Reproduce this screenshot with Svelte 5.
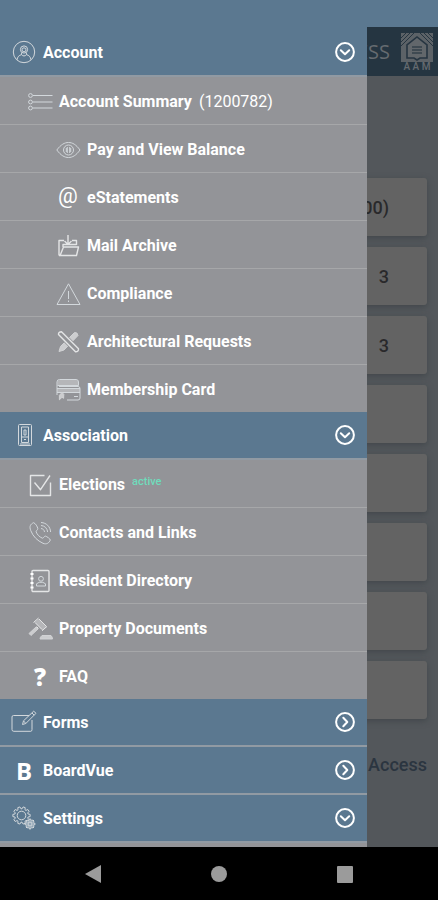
<script>
  const sections = [
    {
      name: 'Account', icon: 'account', open: true,
      items: [
        { name: 'Account Summary', note: '(1200782)', icon: 'summary' },
        { name: 'Pay and View Balance', icon: 'eye', sub: true },
        { name: 'eStatements', icon: 'at', sub: true },
        { name: 'Mail Archive', icon: 'archive', sub: true },
        { name: 'Compliance', icon: 'warning', sub: true },
        { name: 'Architectural Requests', icon: 'tools', sub: true },
        { name: 'Membership Card', icon: 'card', sub: true }
      ]
    },
    {
      name: 'Association', icon: 'door', open: true,
      items: [
        { name: 'Elections', badge: 'active', icon: 'check' },
        { name: 'Contacts and Links', icon: 'phone' },
        { name: 'Resident Directory', icon: 'directory' },
        { name: 'Property Documents', icon: 'gavel' },
        { name: 'FAQ', icon: 'question' }
      ]
    },
    { name: 'Forms', icon: 'forms', open: false, items: [] },
    { name: 'BoardVue', icon: 'board', open: false, items: [] },
    { name: 'Settings', icon: 'gears', open: true, items: [] }
  ];

  const cards = ['(0.00)', '3', '3', '', '', '', '', ''];

  function gear(cx, cy, outer, inner, teeth) {
    const pts = [];
    for (let i = 0; i < teeth; i++) {
      const a = (i * 2 * Math.PI) / teeth;
      const s = Math.PI / teeth;
      for (const [r, d] of [[inner, -0.75], [outer, -0.4], [outer, 0.4], [inner, 0.75]]) {
        pts.push(`${(cx + r * Math.cos(a + d * s)).toFixed(2)},${(cy + r * Math.sin(a + d * s)).toFixed(2)}`);
      }
    }
    return pts.join(' ');
  }
</script>

{#snippet icon(kind)}
  <span class="icon" aria-hidden="true">
    {#if kind === 'at'}
      <span class="at">@</span>
    {:else if kind === 'question'}
      <span class="question">?</span>
    {:else if kind === 'board'}
      <span class="board">B</span>
    {:else}
      <svg viewBox="0 0 24 24" width="24" height="24">
        {#if kind === 'account'}
          <circle cx="12" cy="12" r="10.7" />
          <circle cx="12" cy="9.5" r="3.6" />
          <circle cx="12" cy="9.8" r="2" />
          <path d="M5 19.8c.5-3 2-4.5 4.600-5.200v-1.800M19 19.800c-.5-3-2-4.500-4.600-5.200v-1.800M9.600 14.600c.6 1.800 4.200 1.800 4.800 0" />
        {:else if kind === 'summary'}
          <circle cx="2.5" cy="5.5" r="1.900" /><circle cx="2.5" cy="12" r="1.900" /><circle cx="2.5" cy="18" r="1.900" />
          <path d="M5 5.500h19.500M5 12h19.500M5 18h19.500" />
        {:else if kind === 'eye'}
          <path d="M.8 12C5 6.500 8.500 4.500 12.500 4.500S20 6.500 24 12c-4 5.500-7.500 7.500-11.500 7.500S5 17.500.8 12z" />
          <circle cx="12.500" cy="12" r="5" />
          <path d="M11.300 9v6M13.700 9v6M10.300 10v4M14.700 10v4" />
        {:else if kind === 'archive'}
          <path class="strong" d="M3 21.500V6.500h5M16 6.500h4.500v4.500M3 21.500h17.500l2-8.500h-15l-3.200 8M7 13v-2.500h13.500M12 1v9M8.500 7l3.500 3.500 3.500-3.500" />
        {:else if kind === 'warning'}
          <path d="M12.500 1.800L24 22.500H1z" />
          <path d="M12.500 9v8M12.500 18.500v1.500" />
        {:else if kind === 'tools'}
          <path class="solid" d="M3 21.500l1.500-5L18.500 2.500q3-.5 3.500 3L8 20z" />
          <path class="under" d="M2.500 4.500q-.2-2.700 3-2.800l17 17q.3 3-3 3z" />
          <path class="strong" d="M2.500 4.500q-.2-2.700 3-2.800l17 17q.3 3-3 3z" />
        {:else if kind === 'card'}
          <path class="tint" d="M3.500 2h16.500q2.500 0 2.500 2.500v3h-21v-3q0-2.500 2-2.500zM1 10.500h23v4H1z" />
          <path d="M1 17V4q0-2.500 2.500-2.500h16.500q2.500 0 2.500 2.500v3.500h-21M3 8.500h19q2 0 2 2v9.500q0 2-2 2H11M1 10.500h23M1 14.500h23M18 18.500h4" />
          <path class="solid" d="M6 14.500l1.800 1.800-.2 4-1.600-1-2.600 2.500v-4.500z" />
        {:else if kind === 'door'}
          <rect x="6.500" y="1.500" width="13" height="21" rx="1" />
          <rect x="9.500" y="4" width="7" height="15.500" />
          <path d="M12 7h2v5h-2zM9.500 14h7M12 16.500h2M8 21h10" />
        {:else if kind === 'check'}
          <path class="strong" d="M16.500 2.500h-14v20h20V9.500" />
          <path class="strong" d="M6.500 9.500l6 7.200L22 2.500" />
        {:else if kind === 'phone'}
          <path d="M5.500 1.700c-3 1.500-4.500 3.600-2.700 8C5 15.500 9.500 19.800 15 22.300c3.700 1.500 6-.4 7.300-3.200.2-1.200-3.500-3.600-4.900-4-1.300-.1-1.700 2.200-3 2.100-3-1.300-5.200-3.500-6.300-6.400-.2-1.300 1.800-1.800 1.700-3.200-.3-1.800-2.200-5.400-4.300-5.900z" />
          <path d="M13 1.500c5.500.3 9.300 4.200 9.600 9.500M13 4.500c3.800.2 6.300 2.900 6.600 6.500M13 7.500c2 .2 3.300 1.500 3.500 3.500" />
        {:else if kind === 'directory'}
          <rect class="strong" x="4" y="1.500" width="17" height="21" rx="1" />
          <path class="dots" d="M2.500 5h3M2.500 9.500h3M2.500 14h3M2.500 18.500h3" />
          <circle cx="13" cy="9.800" r="2.400" />
          <path d="M8.500 17v-2.200l2.700-1.500h3.600l2.700 1.500V17z" />
        {:else if kind === 'gavel'}
          <path class="tint" d="M6.500 5L10.500 1.500l8.500 8.500-4.500 3.500z" />
          <path class="fine" d="M5.500 5.500l5-4.500M14 13.800l5-4.500M7 5.500l7 7M11 2l7 7M8.500 9.500l2 2" />
          <path class="solid" d="M8 10l2 2-7 6.500-2-2zM14 18.500h9q1.500 1.500 1.500 3.500H12q0-2 2-3.500z" />
        {:else if kind === 'forms'}
          <path d="M17 5.500H1.500q-1.500 0-1.500 1.500v12.500q0 1.800 1.800 1.800h17q1.200 0 1.200-1.800V10" />
          <path d="M10.500 14.500l1-3.700L21.700 1.200l2.300 2.100L13.800 13.500zM20 3l2.200 2.200M11.500 10.800l2.300 2.700" />
        {:else if kind === 'gears'}
          <polygon points={gear(9.5, 9.5, 8.7, 6.7, 10)} />
          <circle cx="9.500" cy="9.500" r="4.300" />
          <polygon class="mist" points={gear(18, 18, 5, 3.6, 8)} />
          <circle cx="18" cy="18" r="2" />
        {/if}
      </svg>
    {/if}
  </span>
{/snippet}

<div class="device">
  <div class="screen">
    <div class="page">
      <header class="topbar">
        <span class="brand">ACCESS</span>
        <span class="logo">
          <svg viewBox="0 0 32 29" width="32" height="29" aria-hidden="true">
            <path d="M0 0h32v29H0z" fill="#5c6267" />
            <path d="M0 5l5-5M0 9l9-9M0 13L13 0M32 5l-5-5M32 9l-9-9M32 13L19 0" stroke="#263541" stroke-width="1" />
            <path d="M6 25V12L16 4l10 8v13h-7l-3 2-3-2z" fill="#62676b" stroke="#263541" stroke-width="1.600" />
            <path d="M11 14h10M11 17h10M11 20h10" stroke="#34414b" stroke-width="1.300" />
          </svg>
          <span class="mark">A A M</span>
        </span>
      </header>
      <main class="cards">
        {#each cards as value}
          <div class="tile">{value}</div>
        {/each}
        <p class="access">Access</p>
      </main>
    </div>

    <nav class="drawer" aria-label="Main menu">
      {#each sections as section}
        <button class="section" type="button" aria-expanded={section.open}>
          {@render icon(section.icon)}
          <span class="label">{section.name}</span>
          <svg class="toggle" viewBox="0 0 20 20" width="20" height="20" aria-hidden="true">
            <circle cx="10" cy="10" r="8.900" />
            {#if section.open}
              <path d="M5.800 8.300l4.200 4 4.200-4" />
            {:else}
              <path d="M8.300 5.800l4 4.200-4 4.200" />
            {/if}
          </svg>
        </button>
        {#if section.items.length}
          <ul>
            {#each section.items as item}
              <li>
                <a class="item" class:sub={item.sub} href="#menu">
                  {@render icon(item.icon)}
                  <span>{item.name}</span>
                  {#if item.note}<span class="note">{item.note}</span>{/if}
                  {#if item.badge}<span class="badge">{item.badge}</span>{/if}
                </a>
              </li>
            {/each}
          </ul>
        {/if}
      {/each}
    </nav>
  </div>

  <div class="system">
    <button type="button" aria-label="Back"><svg viewBox="0 0 16 18" width="16" height="18"><path d="M0 9L16 0v18z" /></svg></button>
    <button type="button" aria-label="Home"><svg viewBox="0 0 16 18" width="16" height="18"><circle cx="8" cy="9" r="8" /></svg></button>
    <button type="button" aria-label="Recent apps"><svg viewBox="0 0 16 18" width="16" height="18"><rect y="1" width="16" height="17" rx="1" /></svg></button>
  </div>
</div>

<style>
  .device {
    display: flex;
    flex-direction: column;
    min-height: 100vh;
    font-family: Roboto, "Liberation Sans", sans-serif;
    background: #000;
  }
  .device *, .device { box-sizing: border-box; }
  .screen {
    flex: 1;
    display: grid;
    grid-template-columns: minmax(0, 1fr);
  }
  .page, .drawer { grid-area: 1 / 1; }
  .page {
    border-top: 27px solid #5b7890;
    background: #53575b;
  }
  .topbar {
    display: flex;
    justify-content: flex-end;
    align-items: center;
    gap: 11px;
    height: 49px;
    padding-right: 5px;
    background: #253541;
  }
  .brand {
    color: #656b70;
    font: 20px "Open Sans", Roboto, sans-serif;
  }
  .logo {
    display: flex;
    flex-direction: column;
    align-items: center;
    padding-top: 2px;
  }
  .logo svg { display: block; }
  .mark {
    color: #656b70;
    font-size: 10px;
    font-weight: 500;
    line-height: 10px;
    white-space: pre;
  }
  .cards {
    display: flex;
    flex-direction: column;
    gap: 11px;
    padding: 102px 11px 0;
  }
  .tile {
    display: flex;
    align-items: center;
    justify-content: flex-end;
    height: 58px;
    padding-right: 38px;
    border-radius: 3px;
    background: #636363;
    box-shadow: 0 2px 6px #42474b;
    color: #29292b;
    font-size: 18px;
    font-weight: 500;
  }
  .access {
    margin: 23px 0 0;
    color: #2b3540;
    font-size: 18px;
    font-weight: 500;
    line-height: 24px;
    text-align: right;
  }
  .drawer {
    width: calc(100% - 71px);
    padding-top: 29px;
    background: linear-gradient(#5b7890 76px, #939498 76px);
    color: #fff;
    font-size: 16px;
    font-weight: 700;
  }
  .section {
    display: flex;
    align-items: center;
    gap: 7px;
    width: 100%;
    height: 48px;
    padding: 0 12px;
    border: 0;
    border-bottom: 2px solid #919aa3;
    background: #5b7890;
    color: inherit;
    font: inherit;
    text-align: left;
  }
  .label { flex: 1; }
  .toggle {
    fill: none;
    stroke: #fff;
    stroke-width: 2;
    stroke-linecap: round;
    stroke-linejoin: round;
  }
  ul {
    margin: 0;
    padding: 0;
    list-style: none;
  }
  li { border-bottom: 1px solid #a6a7a9; }
  li:last-child { border-bottom: 0; }
  .item {
    display: flex;
    align-items: center;
    gap: 7px;
    height: 47px;
    padding-top: 2px;
    padding-left: 28px;
    color: inherit;
    text-decoration: none;
    white-space: nowrap;
  }
  .sub { padding-left: 56px; }
  .note { font-weight: 400; }
  .badge {
    padding-bottom: 6px;
    color: #6fdcbc;
    font-size: 11px;
    font-weight: 500;
  }
  .icon {
    display: flex;
    align-items: center;
    justify-content: center;
    flex: none;
    width: 24px;
    height: 24px;
  }
  .icon svg {
    overflow: visible;
    fill: none;
    stroke: #d3d8dc;
    stroke-width: 1;
    stroke-linejoin: round;
  }
  .icon .strong {
    stroke: #e4e5e6;
    stroke-width: 1.4;
  }
  .icon .solid {
    fill: #cccdcf;
    stroke: #d2d3d5;
  }
  .icon .under { fill: #939498; stroke: #939498; stroke-width: 3; }
  .icon .tint { fill: #b5b6b9; stroke: none; }
  .icon .mist { fill: #8fa4b5; }
  .icon .fine { stroke: #e4e5e6; }
  .icon .dots { stroke: #fff; stroke-width: 2; }
  .at {
    padding-bottom: 4px;
    font-size: 22px;
    font-weight: 400;
  }
  .question { font: 800 24px "Open Sans", "Noto Sans", sans-serif; }
  .board { font: 700 24px "Open Sans", Roboto, sans-serif; }
  .system {
    display: flex;
    align-items: center;
    justify-content: center;
    gap: 110px;
    height: 53px;
  }
  .system button {
    padding: 0;
    border: 0;
    background: none;
  }
  .system svg {
    display: block;
    fill: #9b9b9b;
  }
</style>
